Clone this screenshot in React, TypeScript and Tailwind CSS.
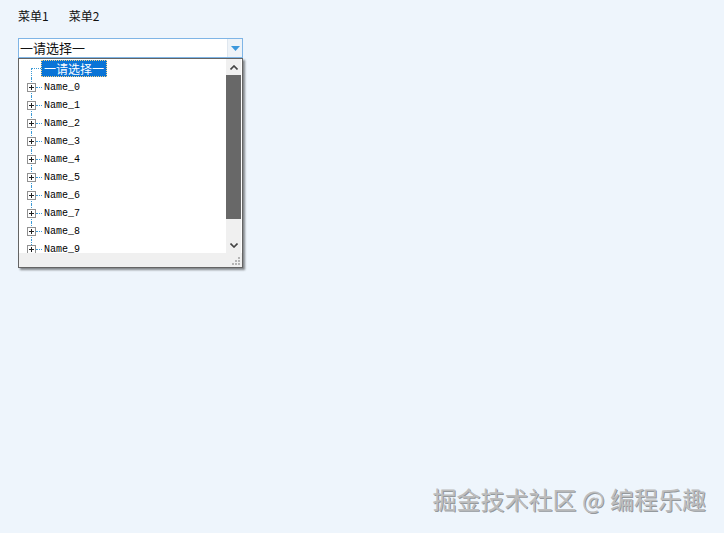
import React from 'react';

const names = Array.from({ length: 10 }, (_, i) => `Name_${i}`);

const PlusBox = () => (
    <span className="w-[9px] h-[9px] border border-[#919191] bg-white flex items-center justify-center shrink-0">
        <svg width="7" height="7" viewBox="0 0 7 7">
            <path d="M1 3.5h5M3.5 1v5" stroke="#222" strokeWidth="1" />
        </svg>
    </span>
);

const App: React.FC = () => {
    return (
        <div className="relative w-full h-[533px] bg-[#eef5fc] overflow-hidden font-['Microsoft_YaHei','Noto_Sans_CJK_SC',sans-serif] text-[#111]">
            {/* Menu bar */}
            <div className="flex gap-[20px] pl-[18px] pt-[7px] text-[12px] leading-[17px]">
                <span>菜单1</span>
                <span>菜单2</span>
            </div>

            {/* Combo box */}
            <div className="ml-[18px] mt-[14px] w-[225px]">
                <div className="h-[20px] flex border border-[#7fb5e6] bg-white">
                    <div className="flex-1 text-[13px] leading-[18px] pl-[1px]">一请选择一</div>
                    <div className="w-[15px] bg-[#eef3f8] border-l border-[#dfe7ef] flex items-center justify-center">
                        <svg width="9" height="5" viewBox="0 0 9 5">
                            <path d="M0 0h9L4.5 5z" fill="#3c98dc" />
                        </svg>
                    </div>
                </div>

                {/* Drop down */}
                <div className="w-[225px] border border-[#646464] bg-white shadow-[2px_2px_2px_rgba(0,0,0,0.45)]">
                    <div className="flex h-[194px]">
                        <div className="flex-1 overflow-hidden">
                            {/* root row */}
                            <div className="relative h-[19px] flex items-center">
                                <span className="absolute left-[12px] top-[9px] w-[10px] border-t border-dotted border-[#3b9ad6]" />
                                <span className="absolute left-[12px] top-[9px] bottom-0 border-l border-dotted border-[#3b9ad6]" />
                                <span className="ml-[22px] h-[17px] px-[2px] bg-[#0a74d6] text-white text-[12px] leading-[15px] border border-dotted border-[#f5d38a]">
                                    一请选择一
                                </span>
                            </div>
                            {names.map((n, i) => (
                                <div key={n} className="relative h-[18px] flex items-center">
                                    <span className={`absolute left-[12px] top-0 border-l border-dotted border-[#3b9ad6] ${i === names.length - 1 ? 'h-[9px]' : 'bottom-0'}`} />
                                    <span className="relative ml-[8px] z-10">
                                        <PlusBox />
                                    </span>
                                    <span className="w-[6px] border-t border-dotted border-[#3b9ad6]" />
                                    <span className="ml-[2px] mt-[2px] font-['Liberation_Mono',monospace] text-[10px] leading-[12px] text-black">
                                        {n}
                                    </span>
                                </div>
                            ))}
                        </div>
                        {/* Scrollbar */}
                        <div className="w-[15px] mr-[1px] bg-[#f0f0f0] flex flex-col">
                            <div className="h-[16px] flex items-center justify-center">
                                <svg width="8" height="5" viewBox="0 0 8 5">
                                    <path d="M0.5 4.5L4 1l3.5 3.5" stroke="#444" strokeWidth="1.6" fill="none" />
                                </svg>
                            </div>
                            <div className="h-[144px] bg-[#686868]" />
                            <div className="flex-1 flex items-end justify-center pb-[5px]">
                                <svg width="8" height="5" viewBox="0 0 8 5">
                                    <path d="M0.5 0.5L4 4l3.5-3.5" stroke="#444" strokeWidth="1.6" fill="none" />
                                </svg>
                            </div>
                        </div>
                    </div>
                    <div className="h-[14px] bg-[#f0f0f0] flex justify-end items-end pr-[2px] pb-[2px]">
                        <svg width="8" height="8" viewBox="0 0 8 8">
                            <g fill="#b5b5b5">
                                <rect x="6" y="0" width="2" height="2" />
                                <rect x="3" y="3" width="2" height="2" />
                                <rect x="6" y="3" width="2" height="2" />
                                <rect x="0" y="6" width="2" height="2" />
                                <rect x="3" y="6" width="2" height="2" />
                                <rect x="6" y="6" width="2" height="2" />
                            </g>
                        </svg>
                    </div>
                </div>
            </div>

            {/* Watermark */}
            <div className="absolute right-[18px] top-[486px] text-[24px] leading-[26px] text-[#bdbdbd] [text-shadow:1px_1px_0_rgba(0,0,0,0.4)] whitespace-nowrap">
                掘金技术社区 @ 编程乐趣
            </div>
        </div>
    );
};

export default App;
